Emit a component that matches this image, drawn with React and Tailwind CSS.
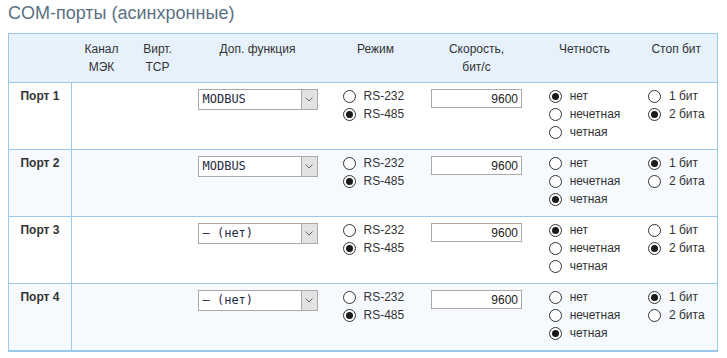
import React from 'react';

const ports = [
  { name: 'Порт 1', fn: 'MODBUS', mode: 1, speed: '9600', parity: 0, stop: 1 },
  { name: 'Порт 2', fn: 'MODBUS', mode: 1, speed: '9600', parity: 2, stop: 0 },
  { name: 'Порт 3', fn: '– (нет)', mode: 1, speed: '9600', parity: 0, stop: 1 },
  { name: 'Порт 4', fn: '– (нет)', mode: 1, speed: '9600', parity: 2, stop: 0 },
];

const Radio = ({ checked, label }) => (
  <div className="flex items-center h-[18px]">
    <span className="flex w-[13px] h-[13px] rounded-full border border-[#333] bg-white items-center justify-center mr-[8px] shrink-0">
      {checked && <span className="w-[7px] h-[7px] rounded-full bg-[#1a1a1a]" />}
    </span>
    <span>{label}</span>
  </div>
);

const Select = ({ value }) => (
  <div className="mx-auto mt-[2px] flex w-[120px] h-[21px] border border-[#a9a9a9] bg-white">
    <div className="flex-1 pl-[4px] leading-[19px] text-[12px] text-[#1f2a44] text-left" style={{ fontFamily: '"DejaVu Sans Mono", "Liberation Mono", monospace' }}>
      {value}
    </div>
    <div className="w-[16px] border-l border-[#a9a9a9] bg-[#e2e2e2] flex items-center justify-center">
      <svg width="8" height="5" viewBox="0 0 8 5">
        <path d="M0.5 0.5 L4 4 L7.5 0.5" fill="none" stroke="#666" strokeWidth="1" />
      </svg>
    </div>
  </div>
);

const App = () => {
  const th = 'font-normal align-top pt-[6px] pb-[6px] leading-[18px]';
  const td = 'align-top pt-[4px] h-[67px] border-t border-[#9cc8ea]';
  return (
    <div className="w-[727px] h-[358px] bg-white px-2 text-[12px] text-[#333]" style={{ fontFamily: '"Liberation Sans", Arial, sans-serif' }}>
      <div className="h-[26px] leading-[26px] text-[18px] text-[#5b7083] mb-[7px]">COM-порты (асинхронные)</div>
      <table className="w-[709px] table-fixed border-collapse border border-b-2 border-[#9cc8ea]">
        <colgroup>
          <col className="w-[63px]" />
          <col className="w-[60px]" />
          <col className="w-[52px]" />
          <col className="w-[148px]" />
          <col className="w-[88px]" />
          <col className="w-[114px]" />
          <col className="w-[102px]" />
          <col className="w-[82px]" />
        </colgroup>
        <thead>
          <tr className="bg-[#e6f1fb] text-center">
            <th className={th}></th>
            <th className={th}>Канал<br />МЭК</th>
            <th className={th}>Вирт.<br />TCP</th>
            <th className={th}>Доп. функция</th>
            <th className={th}>Режим</th>
            <th className={th}>Скорость,<br />бит/с</th>
            <th className={th}>Четность</th>
            <th className={th}>Стоп бит</th>
          </tr>
        </thead>
        <tbody>
          {ports.map((p, i) => (
            <tr key={p.name} className={i % 2 ? 'bg-[#f6faff]' : 'bg-white'}>
              <td className={`${td} border-r text-center font-bold leading-[18px]`}>{p.name}</td>
              <td className={td}></td>
              <td className={td}></td>
              <td className={`${td} text-center`}>
                <Select value={p.fn} />
              </td>
              <td className={td}>
                <div className="inline-block pl-[11px]">
                  <Radio checked={p.mode === 0} label="RS-232" />
                  <Radio checked={p.mode === 1} label="RS-485" />
                </div>
              </td>
              <td className={`${td} text-center`}>
                <input
                  readOnly
                  value={p.speed}
                  className="mt-[2px] w-[91px] h-[19px] border border-[#a9a9a9] bg-white text-right pr-[3px] text-[12px] text-[#222] outline-none"
                  style={{ fontFamily: '"Liberation Sans", Arial, sans-serif' }}
                />
              </td>
              <td className={`${td} text-center`}>
                <div className="inline-block text-left">
                  <Radio checked={p.parity === 0} label="нет" />
                  <Radio checked={p.parity === 1} label="нечетная" />
                  <Radio checked={p.parity === 2} label="четная" />
                </div>
              </td>
              <td className={`${td} text-center`}>
                <div className="inline-block text-left">
                  <Radio checked={p.stop === 0} label="1 бит" />
                  <Radio checked={p.stop === 1} label="2 бита" />
                </div>
              </td>
            </tr>
          ))}
        </tbody>
      </table>
    </div>
  );
};

export default App;
